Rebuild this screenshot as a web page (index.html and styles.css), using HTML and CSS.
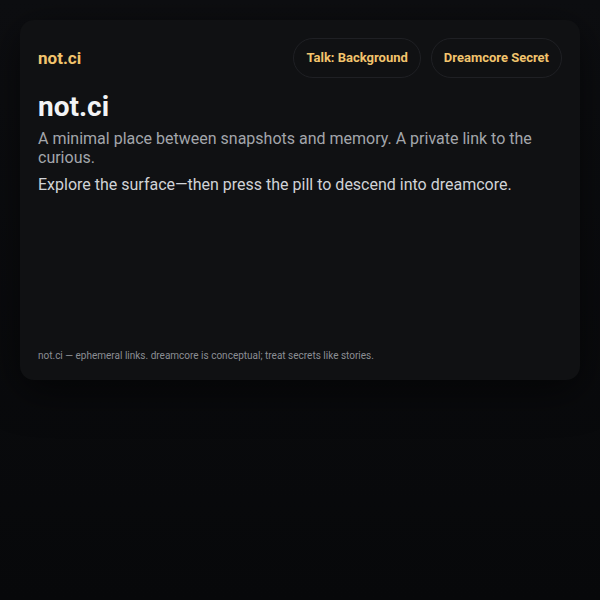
FILE: index.html
```html
<!DOCTYPE html>
<html lang="en">
<head>
    <meta charset="utf-8">
    <title>not.ci</title>
    <link rel="stylesheet" href="styles.css">
</head>
<body>
    <div class="card">
        <div class="header">
            <div class="brand">not.ci</div>
            <div class="pills">
                <a class="pill" href="#">Talk: Background</a>
                <a class="pill" href="#">Dreamcore Secret</a>
            </div>
        </div>

        <h1>not.ci</h1>
        <p class="lead">A minimal place between snapshots and memory. A private link to the curious.</p>
        <p class="hint">Explore the surface&mdash;then press the pill to descend into dreamcore.</p>

        <div class="footer">not.ci &mdash; ephemeral links. dreamcore is conceptual; treat secrets like stories.</div>
    </div>
</body>
</html>
```

FILE: styles.css
```css
html {
    height: 100%;
}

body {
    margin: 0;
    min-height: 100%;
    padding: 20px;
    box-sizing: border-box;
    background: linear-gradient(180deg, #0d0e11 0%, #07080a 100%);
    font-family: Roboto, 'Liberation Sans', sans-serif;
    color: #e6e7ea;
}

.card {
    min-height: 360px;
    box-sizing: border-box;
    padding: 18px;
    background-color: #101113;
    border-radius: 14px;
    box-shadow: 0 10px 40px rgba(0, 0, 0, 0.6);
    display: flex;
    flex-direction: column;
}

.header {
    display: flex;
    justify-content: space-between;
    align-items: center;
}

.brand {
    color: #f2c46d;
    font-weight: 700;
    font-size: 17px;
}

.pills {
    display: flex;
    gap: 10px;
}

.pill {
    display: block;
    padding: 11px 12px;
    border: 1px solid #1f2024;
    border-radius: 20px;
    color: #f2c46d;
    font-weight: 700;
    font-size: 13px;
    text-decoration: none;
    line-height: 16px;
}

h1 {
    margin: 12px 0 0;
    font-size: 28px;
    line-height: 34px;
    font-weight: 700;
    color: #f2f3f5;
}

.lead {
    margin: 6px 0 0;
    font-size: 16px;
    line-height: 18.5px;
    color: #a3a6ab;
}

.hint {
    margin: 8px 0 0;
    font-size: 16px;
    line-height: 19px;
    color: #d0d3d7;
}

.footer {
    margin-top: auto;
    font-size: 10px;
    color: #8b8e93;
    padding-bottom: 1px;
}
```
